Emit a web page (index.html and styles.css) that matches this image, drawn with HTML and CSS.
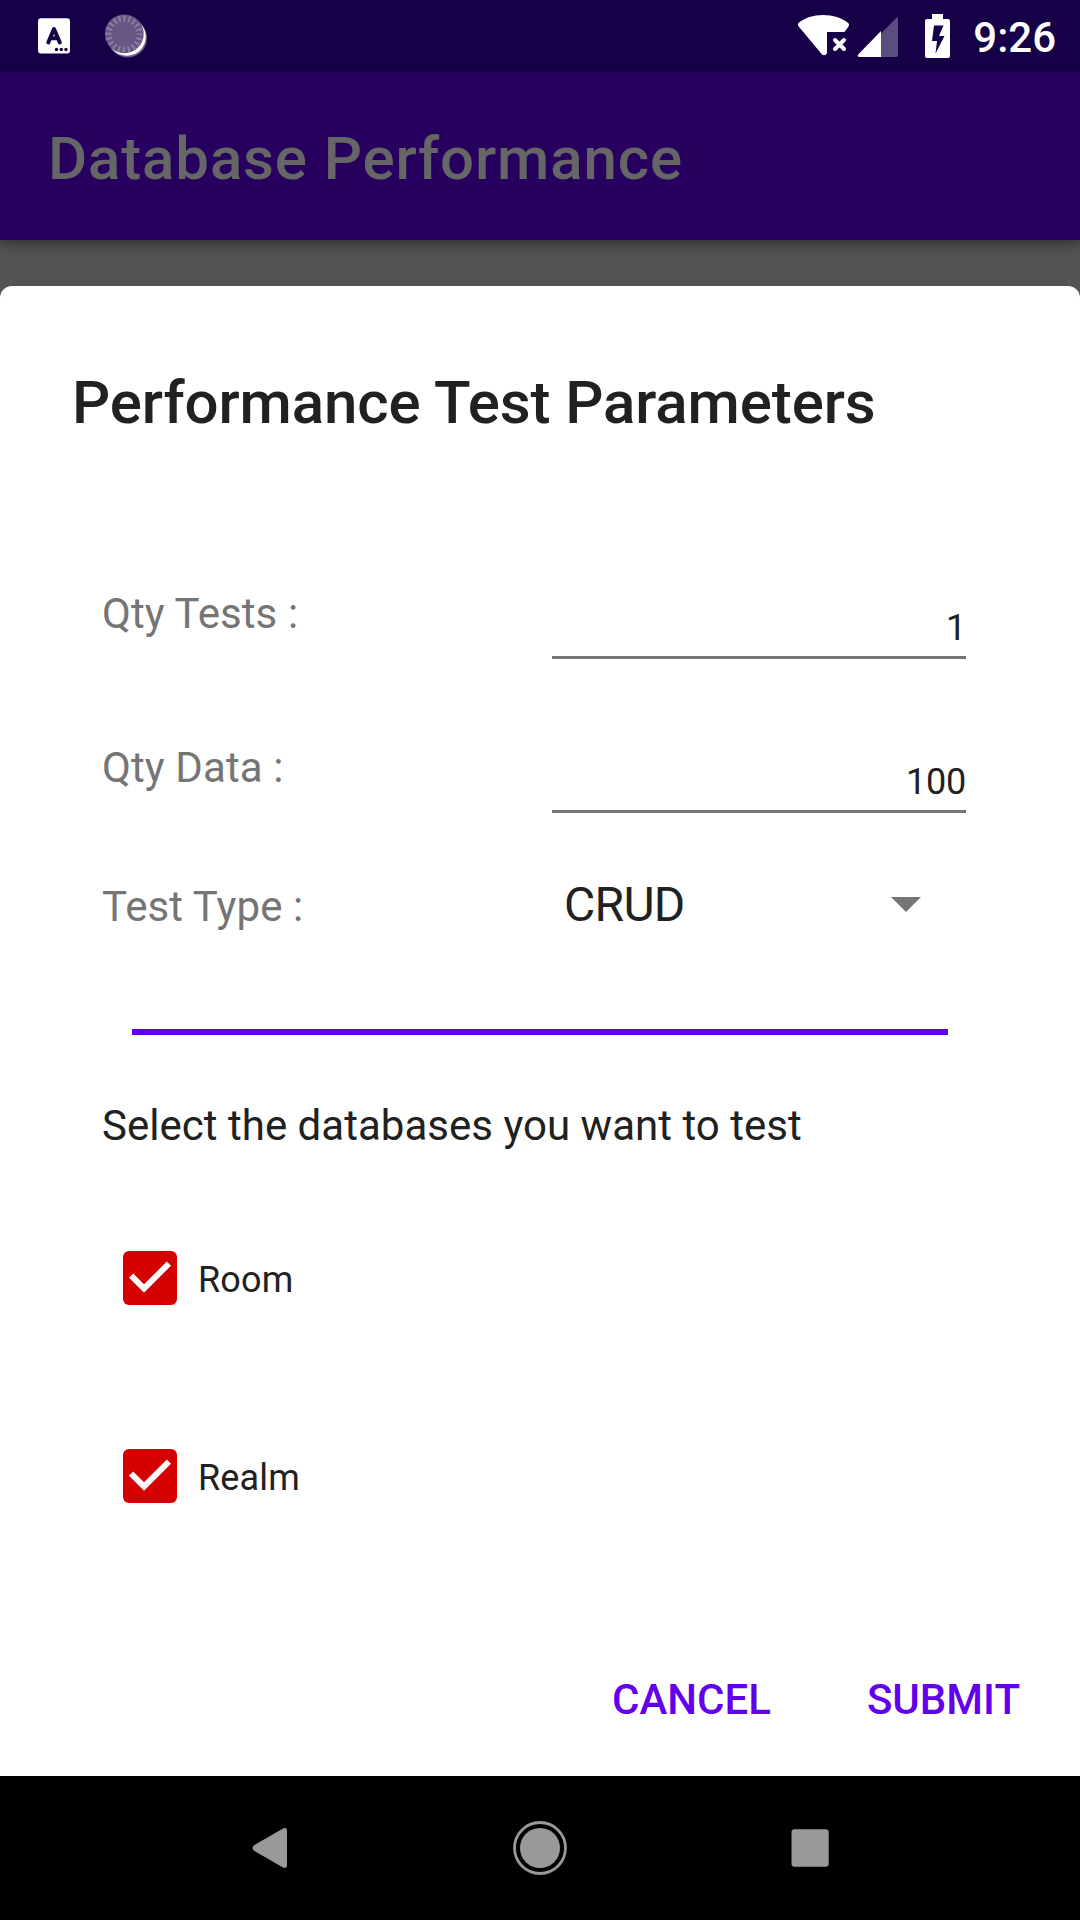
FILE: index.html
```html
<!DOCTYPE html>
<html lang="en">
<head>
<meta charset="utf-8">
<title>Database Performance</title>
<link rel="stylesheet" href="styles.css">
</head>
<body>
<div class="screen">
  <header class="status-bar">
    <svg class="status-icons" width="160" height="72" viewBox="0 0 160 72" aria-hidden="true">
      <rect x="38" y="18.300" width="32" height="35.200" rx="3" fill="#fff"/>
      <path d="M48.300 42.500 54 29 59.800 42.500M50 38.300h8" fill="none" stroke="#160048" stroke-width="4" stroke-linecap="round" stroke-linejoin="round"/>
      <g fill="#160048"><circle cx="56.500" cy="49.500" r="1.700"/><circle cx="61.300" cy="49.500" r="1.700"/><circle cx="66" cy="49.500" r="1.700"/></g>
      <circle cx="127.500" cy="38" r="19.500" fill="#6f628c"/>
      <circle cx="126.800" cy="36.800" r="19" fill="#fff"/>
      <circle cx="124.300" cy="33.800" r="19.400" fill="#685685"/>
      <circle cx="124" cy="34" r="15.500" fill="none" stroke="#8d80a3" stroke-width="6" stroke-dasharray="1.900 2.969" stroke-dashoffset=".95"/>
    </svg>
    <div class="status-right">
      <svg width="160" height="72" viewBox="0 0 160 72" aria-hidden="true">
        <path d="M8.300 23.300C20 12.200 46 12.200 58.500 23.300Q59.500 24.500 58.700 26.200L54.500 32H37V53Q35.500 56.500 32 54.500L8.300 26Q7.500 24.500 8.300 23.300Z" fill="#fff"/>
        <path d="m45 40 9 9m0-9-9 9" fill="none" stroke="#fff" stroke-width="4" stroke-linecap="round"/>
        <path d="M107 17.200q1-.7 1 1V55q0 2-2 2H91V33.500Z" fill="#5c4c80"/>
        <path d="M91 31V57H69q-2-.7-.8-2.500Z" fill="#fff"/>
        <path fill-rule="evenodd" d="M142 14h11v5h5q2 0 2 2v35q0 2-2 2h-21q-2 0-2-2V21q0-2 2-2h5ZM144 25.500 142 41h5l-1.500 12.500 9-17.500h-5.500l4.500-10.500Z" fill="#fff"/>
      </svg>
      <time class="clock">9:26</time>
    </div>
  </header>
  <div class="app-bar">Database Performance</div>
  <main class="scrim">
    <section class="dialog">
      <h1 class="dialog-title">Performance Test Parameters</h1>
      <div class="form-row">
        <span class="label">Qty Tests :</span>
        <span class="input">1</span>
      </div>
      <div class="form-row">
        <span class="label">Qty Data :</span>
        <span class="input">100</span>
      </div>
      <div class="form-row form-row-select">
        <span class="label">Test Type :</span>
        <span class="select">CRUD
          <svg class="caret" width="30" height="15" viewBox="0 0 30 15" aria-hidden="true"><path d="M0 0h30L15 15Z" fill="#757575"/></svg>
        </span>
      </div>
      <div class="divider"></div>
      <p class="prompt">Select the databases you want to test</p>
      <div class="options">
        <div class="option">
          <svg width="54" height="54" viewBox="3 3 18 18" aria-hidden="true"><rect x="3" y="3" width="18" height="18" rx="2" fill="#d50000"/><path d="m10 16.900-5-5 1.400-1.400L10 14.100l7.600-7.600L19 7.900Z" fill="#fff"/></svg>
          <span>Room</span>
        </div>
        <div class="option">
          <svg width="54" height="54" viewBox="3 3 18 18" aria-hidden="true"><rect x="3" y="3" width="18" height="18" rx="2" fill="#d50000"/><path d="m10 16.900-5-5 1.400-1.400L10 14.100l7.600-7.600L19 7.900Z" fill="#fff"/></svg>
          <span>Realm</span>
        </div>
      </div>
      <div class="actions">
        <span class="action">CANCEL</span>
        <span class="action">SUBMIT</span>
      </div>
    </section>
  </main>
  <nav class="nav-bar">
    <svg width="60" height="60" viewBox="0 0 60 60" aria-hidden="true"><path d="M13.700 27.500 43 10.500q4-1.500 4 2v35q0 3.500-4 2L13.700 32.500q-2-2.500 0-5Z" fill="#999"/></svg>
    <svg width="60" height="60" viewBox="0 0 60 60" aria-hidden="true"><circle cx="30" cy="30" r="25.500" fill="none" stroke="#999" stroke-width="2.800"/><circle cx="30" cy="30" r="20" fill="#999"/></svg>
    <svg width="60" height="60" viewBox="0 0 60 60" aria-hidden="true"><rect x="11.500" y="11.300" width="37.200" height="37.400" rx="3" fill="#999"/></svg>
  </nav>
</div>
</body>
</html>
```
FILE: styles.css
```css
* { box-sizing: border-box; }

body {
  margin: 0;
  font-family: Roboto, "Liberation Sans", sans-serif;
  background: #000;
}

svg { display: block; flex: none; }

.screen {
  display: flex;
  flex-direction: column;
  width: 1080px;
  height: 1920px;
  overflow: hidden;
}

.status-bar {
  display: flex;
  justify-content: space-between;
  height: 72px;
  background: #160048;
}

.status-right {
  display: flex;
  gap: 23px;
  padding-right: 24px;
}

.clock {
  font-size: 42px;
  font-weight: 500;
  line-height: 76px;
  color: #fff;
}

.app-bar {
  position: relative;
  height: 168px;
  padding: 5px 48px 0;
  font-size: 60px;
  font-weight: 500;
  line-height: 163px;
  letter-spacing: 0.87px;
  color: #666;
  background: #27005f;
  box-shadow: 0 4px 12px rgba(0, 0, 0, 0.4);
}

.scrim {
  height: 1536px;
  padding-top: 46px;
  background: #535353;
}

.dialog {
  position: relative;
  height: 1490px;
  padding-top: 76px;
  border-radius: 12px 12px 0 0;
  background: #fff;
  color: #212121;
}

.dialog-title {
  margin: 0 72px 80px;
  font-size: 60px;
  font-weight: 500;
  line-height: 81px;
  letter-spacing: -0.1px;
}

.form-row {
  display: grid;
  grid-template-columns: 450px 414px;
  align-items: start;
  height: 154px;
  margin-left: 102px;
}

.form-row-select { height: 198px; }

.label {
  padding-top: 61px;
  font-size: 42px;
  line-height: 60px;
  letter-spacing: 0.1px;
  color: #757575;
}

.form-row-select .label { padding-top: 46px; }

.input {
  height: 56px;
  margin-top: 80px;
  border-bottom: 3px solid #757575;
  font-size: 36px;
  line-height: 50px;
  letter-spacing: -0.2px;
  text-align: right;
}

.select {
  display: flex;
  align-items: center;
  justify-content: space-between;
  margin-top: 44px;
  padding: 0 45px 0 12px;
  font-size: 48px;
  line-height: 60px;
  letter-spacing: -0.7px;
}

.caret { margin-bottom: 2px; }

.divider {
  height: 6px;
  margin: 0 132px;
  background: #6200ee;
}

.prompt {
  margin: 61px 102px 95px;
  font-size: 42px;
  line-height: 60px;
  letter-spacing: 0.02px;
}

.options {
  display: flex;
  flex-direction: column;
  gap: 144px;
  margin-left: 123px;
}

.option {
  display: flex;
  gap: 21px;
  height: 54px;
  font-size: 36px;
  line-height: 58px;
  letter-spacing: 0.15px;
}

.actions {
  display: flex;
  justify-content: flex-end;
  gap: 96px;
  margin-top: 167px;
  padding-right: 60px;
  font-size: 42px;
  font-weight: 500;
  line-height: 60px;
  color: #6200ee;
}

.nav-bar {
  display: flex;
  align-items: center;
  justify-content: center;
  gap: 210px;
  height: 144px;
  background: #000;
}
```
